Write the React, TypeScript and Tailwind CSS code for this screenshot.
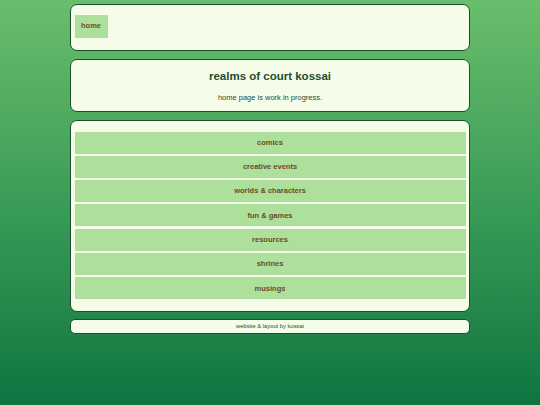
import React from "react";

const links = ["comics", "creative events", "worlds & characters", "fun & games", "resources", "shrines", "musings"];

export default function App() {
  return (
    <div
      className="min-h-[405px] w-full bg-gradient-to-b from-[#68be6b] via-[#3a9c58] to-[#0b7540] pt-[4px] pb-[10px]"
      style={{ fontFamily: '"Liberation Sans", Arial, sans-serif' }}
    >
      <div className="mx-auto flex w-[400px] flex-col gap-[8px]">
        <div className="h-[47px] rounded-[7px] border-[1.5px] border-[#1b4f30] bg-[#f5fde9] pl-[3.5px] pt-[9.5px]">
          <div className="flex h-[23px] w-[33px] items-center justify-center bg-[#ade09b] text-[7.5px] font-bold text-[#6b4c26]">
            home
          </div>
        </div>
        <div className="flex h-[53px] flex-col items-center rounded-[7px] border-[1.5px] border-[#1b4f30] bg-[#f5fde9] pt-[9px]">
          <div className="text-[11.5px] font-bold leading-[14px] text-[#1f4d30]">realms of court kossai</div>
          <div className="mt-[10px] text-[7.5px] leading-[9px] text-[#244a33]">home page is work in progress.</div>
        </div>
        <div className="flex h-[192px] flex-col gap-[2.3px] rounded-[7px] border-[1.5px] border-[#1b4f30] bg-[#f5fde9] px-[3.5px] pt-[10.5px]">
          {links.map((l) => (
            <div
              key={l}
              className="flex h-[22px] shrink-0 items-center justify-center bg-[#ade09b] text-[7.5px] font-bold text-[#6b4c26]"
            >
              {l}
            </div>
          ))}
        </div>
        <div className="-mt-[1px] flex h-[15px] items-center justify-center rounded-[5px] border-[1.5px] border-[#1b4f30] bg-[#f5fde9] text-[5.8px] text-[#244a33]">
          website &amp; layout by kossai
        </div>
      </div>
    </div>
  );
}
